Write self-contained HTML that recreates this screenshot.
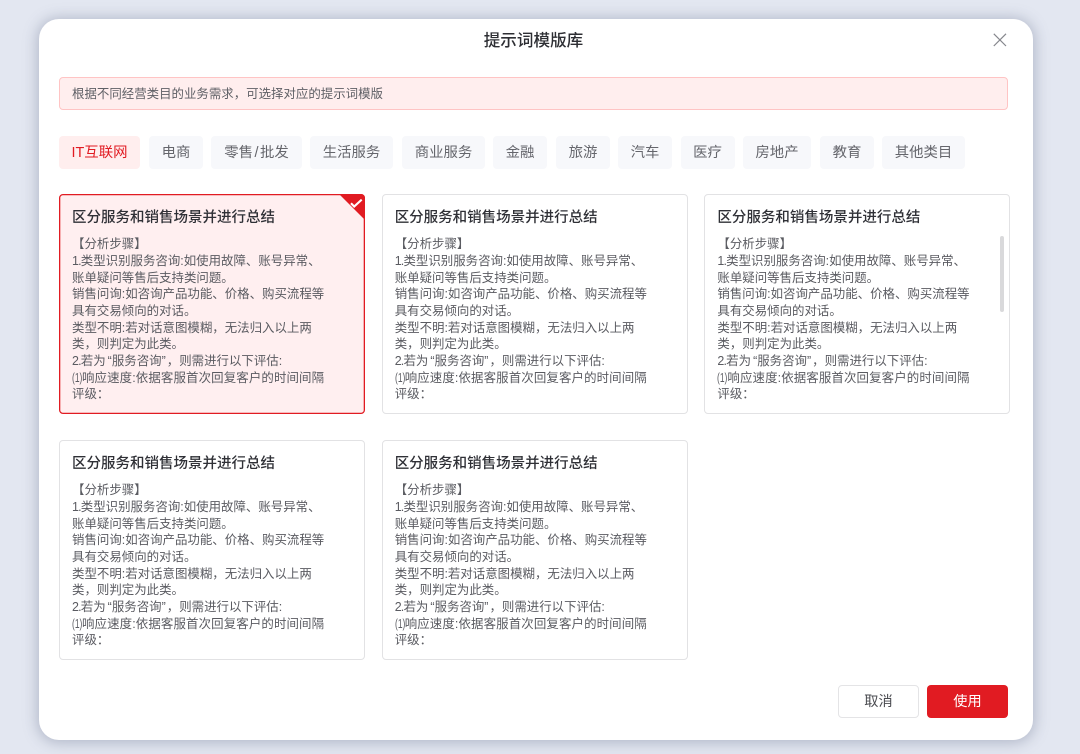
<!DOCTYPE html>
<html lang="zh"><head><meta charset="utf-8"><title>提示词模版库</title>
<style>
*{box-sizing:border-box;margin:0;padding:0}
html,body{width:1080px;height:754px;overflow:hidden;background:#e3e7f1;font-family:"Liberation Sans","Noto Sans CJK SC",sans-serif}
.abs,.modal,.tab,.card,.btn,.notice,.hd{position:absolute}
.modal{left:39px;top:19px;width:994px;height:721px;background:#fff;border-radius:20px;box-shadow:0 1px 14px 2px rgba(110,120,145,.42)}
.hd{left:0;width:1067px;top:30px;text-align:center;font-size:16.6px;line-height:21px;color:#2d2e33;font-weight:500}
.notice{left:59px;top:77px;width:949px;height:33px;background:#ffeeee;border:1px solid #ffc4c4;border-radius:4px;font-size:12.45px;line-height:33px;padding-left:12px;color:#5f6066;white-space:nowrap}
.tab{top:135.5px;height:33px;background:#f7f8fb;border-radius:4px;font-size:14.4px;line-height:35px;text-align:center;color:#65666c;white-space:nowrap}
.tab.on{background:#ffeeee;color:#e11b22}
.card{width:306px;height:220px;border:1px solid #e2e2e4;border-radius:4px;background:#fff;overflow:hidden}
.card.on{background:#ffeff0;border-color:#e11b22;box-shadow:inset 0 0 0 .3px #e11b22}
.t{position:absolute;left:12px;top:13px;font-size:14.5px;line-height:20px;font-weight:500;color:#2f3036;white-space:nowrap}
.b{position:absolute;left:12px;top:41.33px;font-size:12.45px;line-height:16.67px;color:#5a5b61;white-space:nowrap}
.n1{letter-spacing:-.8px}
.n2{display:inline-block;width:10px;transform:scaleX(.68);transform-origin:0 50%;letter-spacing:0}
.w{letter-spacing:.12px}
.l{position:relative;top:-1px}
.ql{margin-left:2px}
.qr{margin-right:1px}
.c{font-family:"Noto Sans CJK TC",sans-serif}
.btn{top:685px;width:81px;height:33px;border-radius:4px;font-size:14.2px;line-height:35px;text-align:center}
</style></head><body>
<div class="modal"></div>
<div class="hd">提示词模版库</div>
<svg class="abs" style="left:992px;top:32px" width="16" height="16" viewBox="0 0 16 16"><path d="M1.8 1.8L14 14M14 1.8L1.8 14" stroke="#85868c" stroke-width="1.2" fill="none"/></svg>
<div class="notice">根据不同经营类目的业务需求，可选择对应的提示词模版</div>

<div class="tab on" style="left:59px;width:81px">IT互联网</div>
<div class="tab" style="left:149px;width:54px">电商</div>
<div class="tab" style="left:211px;width:91px">零售<span style="margin:0 1.5px">/</span>批发</div>
<div class="tab" style="left:310px;width:83px">生活服务</div>
<div class="tab" style="left:402px;width:83px">商业服务</div>
<div class="tab" style="left:493px;width:54px">金融</div>
<div class="tab" style="left:556px;width:54px">旅游</div>
<div class="tab" style="left:618px;width:54px">汽车</div>
<div class="tab" style="left:680.5px;width:54px">医疗</div>
<div class="tab" style="left:743px;width:68px">房地产</div>
<div class="tab" style="left:820px;width:54px">教育</div>
<div class="tab" style="left:882px;width:83px">其他类目</div>

<div class="card on" style="left:59px;top:194px">
<div class="t">区分服务和销售场景并进行总结</div>
<div class="b">【分析步骤】<br><span class="n1">1.</span>类型识别服务咨询:如使用故障、账号异常、<br>账单疑问等售后支持类问题。<br>销售问询:如咨询产品功能、价格、购买流程等<br>具有交易倾向的对话。<br>类型不明:若对话意图模糊，无法归入以上两<br>类，则判定为此类。<br><span class="n1">2.</span>若为<span class="ql">“</span>服务咨询<span class="qr">”</span>，则需进行以下评估:<br><span class="w"><span class="n2">(1)</span>响应速度:依据客服首次回复客户的时间间隔</span><br><span class="l">评级<span class="c">：</span></span></div>
</div>
<svg class="abs" style="left:339px;top:194px" width="26" height="26" viewBox="0 0 26 26"><path d="M0 0H22a4 4 0 0 1 4 4V26Z" fill="#e11b22"/><path d="M12 9.3L15.2 12.5L22.7 5.6" stroke="#fff" stroke-width="2.1" fill="none"/></svg>

<div class="card" style="left:381.7px;top:194px">
<div class="t">区分服务和销售场景并进行总结</div>
<div class="b">【分析步骤】<br><span class="n1">1.</span>类型识别服务咨询:如使用故障、账号异常、<br>账单疑问等售后支持类问题。<br>销售问询:如咨询产品功能、价格、购买流程等<br>具有交易倾向的对话。<br>类型不明:若对话意图模糊，无法归入以上两<br>类，则判定为此类。<br><span class="n1">2.</span>若为<span class="ql">“</span>服务咨询<span class="qr">”</span>，则需进行以下评估:<br><span class="w"><span class="n2">(1)</span>响应速度:依据客服首次回复客户的时间间隔</span><br><span class="l">评级<span class="c">：</span></span></div>
</div>

<div class="card" style="left:704.4px;top:194px;width:305.6px">
<div class="t">区分服务和销售场景并进行总结</div>
<div class="b">【分析步骤】<br><span class="n1">1.</span>类型识别服务咨询:如使用故障、账号异常、<br>账单疑问等售后支持类问题。<br>销售问询:如咨询产品功能、价格、购买流程等<br>具有交易倾向的对话。<br>类型不明:若对话意图模糊，无法归入以上两<br>类，则判定为此类。<br><span class="n1">2.</span>若为<span class="ql">“</span>服务咨询<span class="qr">”</span>，则需进行以下评估:<br><span class="w"><span class="n2">(1)</span>响应速度:依据客服首次回复客户的时间间隔</span><br><span class="l">评级<span class="c">：</span></span></div>
<div class="abs" style="left:294.5px;top:41px;width:4px;height:76px;background:#d9d9db;border-radius:2px"></div>
</div>

<div class="card" style="left:59px;top:440px">
<div class="t">区分服务和销售场景并进行总结</div>
<div class="b">【分析步骤】<br><span class="n1">1.</span>类型识别服务咨询:如使用故障、账号异常、<br>账单疑问等售后支持类问题。<br>销售问询:如咨询产品功能、价格、购买流程等<br>具有交易倾向的对话。<br>类型不明:若对话意图模糊，无法归入以上两<br>类，则判定为此类。<br><span class="n1">2.</span>若为<span class="ql">“</span>服务咨询<span class="qr">”</span>，则需进行以下评估:<br><span class="w"><span class="n2">(1)</span>响应速度:依据客服首次回复客户的时间间隔</span><br><span class="l">评级<span class="c">：</span></span></div>
</div>

<div class="card" style="left:381.7px;top:440px">
<div class="t">区分服务和销售场景并进行总结</div>
<div class="b">【分析步骤】<br><span class="n1">1.</span>类型识别服务咨询:如使用故障、账号异常、<br>账单疑问等售后支持类问题。<br>销售问询:如咨询产品功能、价格、购买流程等<br>具有交易倾向的对话。<br>类型不明:若对话意图模糊，无法归入以上两<br>类，则判定为此类。<br><span class="n1">2.</span>若为<span class="ql">“</span>服务咨询<span class="qr">”</span>，则需进行以下评估:<br><span class="w"><span class="n2">(1)</span>响应速度:依据客服首次回复客户的时间间隔</span><br><span class="l">评级<span class="c">：</span></span></div>
</div>

<div class="btn" style="left:838px;border:1px solid #e4e4e6;background:#fff;color:#4a4b50;line-height:33px">取消</div>
<div class="btn" style="left:927px;background:#e11b22;color:#fff">使用</div>
</body></html>
